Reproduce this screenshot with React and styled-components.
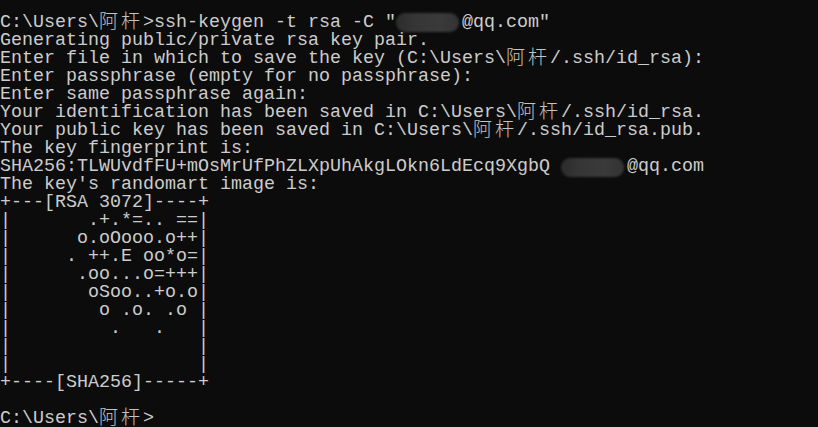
import React from "react";
import styled, { createGlobalStyle } from "styled-components";

const GlobalStyle = createGlobalStyle`
  html, body {
    margin: 0;
    padding: 0;
    background: #0c0c0c;
  }
`;

const Screen = styled.div`
  width: 818px;
  height: 427px;
  overflow: hidden;
  box-sizing: border-box;
  padding-top: 14px;
  background: #0c0c0c;
  color: #cccccc;
  font-family: "Liberation Mono", "DejaVu Sans Mono", monospace;
  font-size: 18.33px;
  line-height: 18px;
`;

const Line = styled.div`
  white-space: pre;
  height: 18px;
`;

// double-width cell, as the console draws CJK glyphs
const Wide = styled.span`
  display: inline-block;
  vertical-align: top;
  width: 22px;
  height: 18px;
  margin-top: -3px;
  font-family: "Noto Sans CJK SC", sans-serif;
  font-size: 19px;
  font-weight: 300;
  line-height: 18px;
  color: #c4c4c4;
`;

const Redact = styled.span`
  display: inline-block;
  vertical-align: top;
  width: ${(p) => p.$cells * 11 - 3}px;
  margin: ${(p) => p.$top}px 3px 0 0;
  height: 19px;
  border-radius: 9px;
  background: linear-gradient(90deg, #2c2c2c 0%, #363636 30%, #3a3a3a 70%, #333 100%);
  filter: blur(0.8px);
`;

const User = () => (
  <>
    C:\Users\<Wide>阿</Wide>
    <Wide>杆</Wide>
  </>
);

const art = [
  "+---[RSA 3072]----+",
  "|       .+.*=.. ==|",
  "|      o.oOooo.o++|",
  "|     . ++.E oo*o=|",
  "|      .oo...o=+++|",
  "|       oSoo..+o.o|",
  "|        o .o. .o |",
  "|         .   .   |",
  "|                 |",
  "|                 |",
  "+----[SHA256]-----+",
];

export default function App() {
  return (
    <>
      <GlobalStyle />
      <Screen>
        <Line>
          <User />
          {'>ssh-keygen -t rsa -C "'}
          <Redact $cells={6} $top={-1} />
          {'@qq.com"'}
        </Line>
        <Line>Generating public/private rsa key pair.</Line>
        <Line>
          Enter file in which to save the key (<User />/.ssh/id_rsa):
        </Line>
        <Line>Enter passphrase (empty for no passphrase):</Line>
        <Line>Enter same passphrase again:</Line>
        <Line>
          Your identification has been saved in <User />/.ssh/id_rsa.
        </Line>
        <Line>
          Your public key has been saved in <User />/.ssh/id_rsa.pub.
        </Line>
        <Line>The key fingerprint is:</Line>
        <Line>
          {"SHA256:TLWUvdfFU+mOsMrUfPhZLXpUhAkgLOkn6LdEcq9XgbQ "}
          <Redact $cells={6} $top={0} />
          @qq.com
        </Line>
        <Line>The key's randomart image is:</Line>
        {art.map((row, i) => (
          <Line key={i}>{row}</Line>
        ))}
        <Line> </Line>
        <Line>
          <User />
          {">"}
        </Line>
      </Screen>
    </>
  );
}
